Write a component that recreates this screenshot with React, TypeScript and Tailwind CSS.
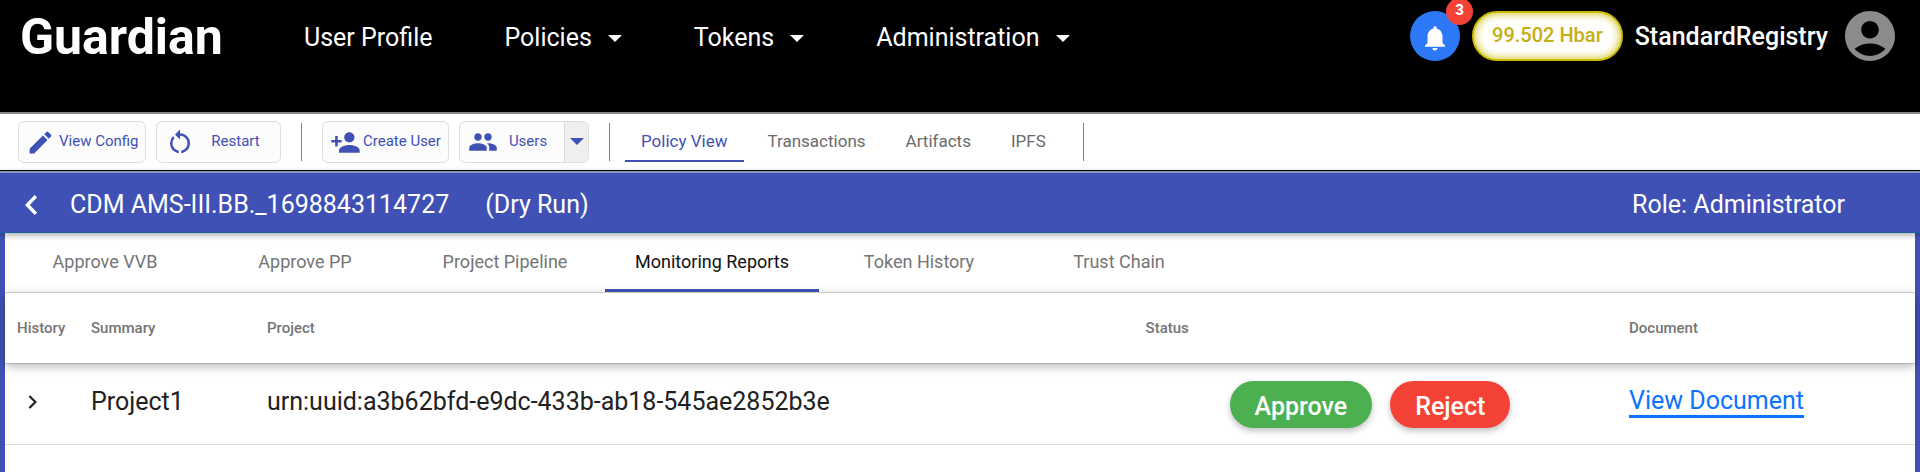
import React from "react";
import {
  MdAccountCircle,
  MdEdit,
  MdNotifications,
  MdPeople,
  MdPersonAdd,
  MdRestartAlt,
} from "react-icons/md";

function Caret({ className }: { className: string }) {
  return (
    <svg viewBox="0 0 14 7" className={className} fill="currentColor" aria-hidden="true">
      <path d="M0 0h14L7 7z" />
    </svg>
  );
}

const menus = ["Policies", "Tokens", "Administration"];

function TopBar() {
  return (
    <header className="flex h-[112px] items-start justify-between bg-black pl-5 pr-5 text-white">
      <div className="flex items-center">
        <div className="w-[284px] text-[50px] leading-[72px] font-bold">Guardian</div>
        <nav className="flex items-center gap-[72px] pt-0.5 text-[25px] leading-[72px]">
          <a href="#profile">User Profile</a>
          {menus.map((m) => (
            <button key={m} type="button" className="flex items-center gap-4">
              {m}
              <Caret className="h-[7px] w-[14px]" />
            </button>
          ))}
        </nav>
      </div>
      <div className="flex items-center pt-[11px]">
        <button
          type="button"
          aria-label="Notifications"
          className="relative flex size-[50px] items-center justify-center rounded-full bg-[#2c78f6] pt-1"
        >
          <MdNotifications className="size-[30px]" />
          <span className="absolute -top-[13px] -right-[13px] flex size-[27px] items-center justify-center rounded-full bg-[#f44336] pb-0.5 text-[15px] font-extrabold">
            3
          </span>
        </button>
        <div className="ml-3 flex h-[50px] items-center rounded-full border-2 border-[#cabb00] bg-white px-[18px] pb-0.5 text-xl font-medium text-[#c6ad12] shadow-[inset_0_0_10px_#cabb00]">
          99.502 Hbar
        </div>
        <div className="ml-3 pt-0.5 text-[25px] font-medium">StandardRegistry</div>
        <button type="button" aria-label="Account" className="ml-3 text-[#8b8b8b]">
          <MdAccountCircle className="-my-[5px] size-[60px]" />
        </button>
      </div>
    </header>
  );
}

const toolButton =
  "flex h-[42px] items-center rounded-md border border-[#dedede] bg-[#fcfcfc] text-[15px] text-[#3f51b5]";

function Divider() {
  return <div className="h-[38px] w-px bg-[#808080]" />;
}

const views = ["Policy View", "Transactions", "Artifacts", "IPFS"];

function ToolBar() {
  return (
    <div className="flex h-[59px] items-center border-t-2 border-b border-t-[#8b8787] border-b-black bg-white pl-[18px]">
      <button type="button" className={toolButton + " w-[128px] gap-1 pl-[7px]"}>
        <MdEdit className="size-[29px] shrink-0" />
        <span className="pb-0.5">View Config</span>
      </button>
      <button type="button" className={toolButton + " ml-[10px] w-[125px] pl-2"}>
        <MdRestartAlt className="size-[30px] shrink-0" />
        <span className="grow pr-1 pb-0.5 text-center">Restart</span>
      </button>
      <div className="ml-5">
        <Divider />
      </div>
      <button type="button" className={toolButton + " ml-5 w-[127px] gap-0.5 pl-[7px]"}>
        <MdPersonAdd className="size-[31px] shrink-0" />
        <span className="pb-0.5">Create User</span>
      </button>
      <div className={toolButton + " ml-[10px] w-[130px] overflow-hidden"}>
        <button type="button" className="flex h-full grow items-center pl-2">
          <MdPeople className="size-[30px] shrink-0" />
          <span className="grow pr-1.5 pb-0.5 text-center">Users</span>
        </button>
        <button
          type="button"
          aria-label="More users"
          className="flex h-full w-6 items-center justify-center border-l border-[#dedede] bg-[#efefef] pb-0.5"
        >
          <Caret className="h-[7px] w-[14px]" />
        </button>
      </div>
      <div className="ml-5">
        <Divider />
      </div>
      <nav className="ml-[15px] flex text-[17px] text-[#6b6b6b]">
        {views.map((v, i) => (
          <a
            key={v}
            href="#view"
            className={
              "mr-2 flex h-10 items-center border-b-2 px-4 pt-0.5 " +
              (i === 0 ? "border-[#3f51b5] text-[#3f51b5]" : "border-transparent")
            }
          >
            {v}
          </a>
        ))}
      </nav>
      <div className="ml-[13px]">
        <Divider />
      </div>
    </div>
  );
}

function PolicyBar() {
  return (
    <div className="relative flex h-[62px] items-center border-t-2 border-b border-t-[#8d91b5] border-b-[#1462a0] bg-[#3f51b5] pl-[25px] pr-[75px] pt-1 text-[25px] text-white shadow-[0_2px_6px_rgba(0,0,0,0.35)]">
      <button type="button" aria-label="Back">
        <svg viewBox="0 0 12 20" className="h-5 w-3" fill="none" stroke="currentColor" strokeWidth="3.4">
          <path d="M10.8 1.2 2.4 10l8.4 8.8" />
        </svg>
      </button>
      <h1 className="ml-[33px]">CDM AMS-III.BB._1698843114727</h1>
      <span className="ml-9">(Dry Run)</span>
      <span className="ml-auto">Role: Administrator</span>
    </div>
  );
}

const tabs = [
  "Approve VVB",
  "Approve PP",
  "Project Pipeline",
  "Monitoring Reports",
  "Token History",
  "Trust Chain",
];

function Tabs() {
  return (
    <nav className="flex h-[60px] border-b border-[#dcdcdc] text-lg text-[#757575]">
      {tabs.map((t) => (
        <a
          key={t}
          href="#tab"
          className={
            "flex min-w-[200px] items-center justify-center border-b-3 px-[30px] pt-0.5 " +
            (t === "Monitoring Reports" ? "border-[#3f51b5] text-[#111111]" : "border-transparent")
          }
        >
          {t}
        </a>
      ))}
    </nav>
  );
}

const pill =
  "h-[47px] rounded-full px-[25px] pt-1 text-[25px] font-medium text-white shadow-[0_3px_6px_rgba(0,0,0,0.25)]";

function Reports() {
  return (
    <table className="w-full table-fixed text-left">
      <thead className="relative shadow-[0_3px_10px_rgba(0,0,0,0.3)]">
        <tr className="h-[70px] border-b border-[#dcdcdc] bg-white text-[15px] text-[#757575]">
          <th className="w-[86px] pl-3 font-medium">History</th>
          <th className="w-[176px] font-medium">Summary</th>
          <th className="w-[46%] font-medium">Project</th>
          <th className="font-medium">Status</th>
          <th className="w-[286px] font-medium">Document</th>
        </tr>
      </thead>
      <tbody>
        <tr className="h-[81px] border-b border-[#dcdcdc] text-[25px] text-[#212121]">
          <td className="pb-1 pl-[23px]">
            <button type="button" aria-label="Show history" className="block">
              <svg viewBox="0 0 10 14" className="h-[14px] w-[10px]" fill="none" stroke="currentColor" strokeWidth="2.2">
                <path d="M1.4 1 7.4 7l-6 6" />
              </svg>
            </button>
          </td>
          <td className="pb-1">Project1</td>
          <td className="pb-1">urn:uuid:a3b62bfd-e9dc-433b-ab18-545ae2852b3e</td>
          <td className="pt-0.5">
            <div className="flex gap-[18px] pl-[84px]">
              <button type="button" className={pill + " bg-[#4caf50]"}>Approve</button>
              <button type="button" className={pill + " bg-[#f44336]"}>Reject</button>
            </div>
          </td>
          <td className="pb-1.5">
            <a href="#document" className="inline-block border-b-3 border-[#0b73ff] leading-7 text-[#0b73ff]">
              View Document
            </a>
          </td>
        </tr>
      </tbody>
    </table>
  );
}

export default function App() {
  return (
    <div className="flex min-h-screen flex-col bg-white font-[Roboto,'Liberation_Sans',sans-serif]">
      <TopBar />
      <ToolBar />
      <PolicyBar />
      <main className="grow border-x-5 border-[#3f51b5]">
        <Tabs />
        <Reports />
      </main>
    </div>
  );
}
